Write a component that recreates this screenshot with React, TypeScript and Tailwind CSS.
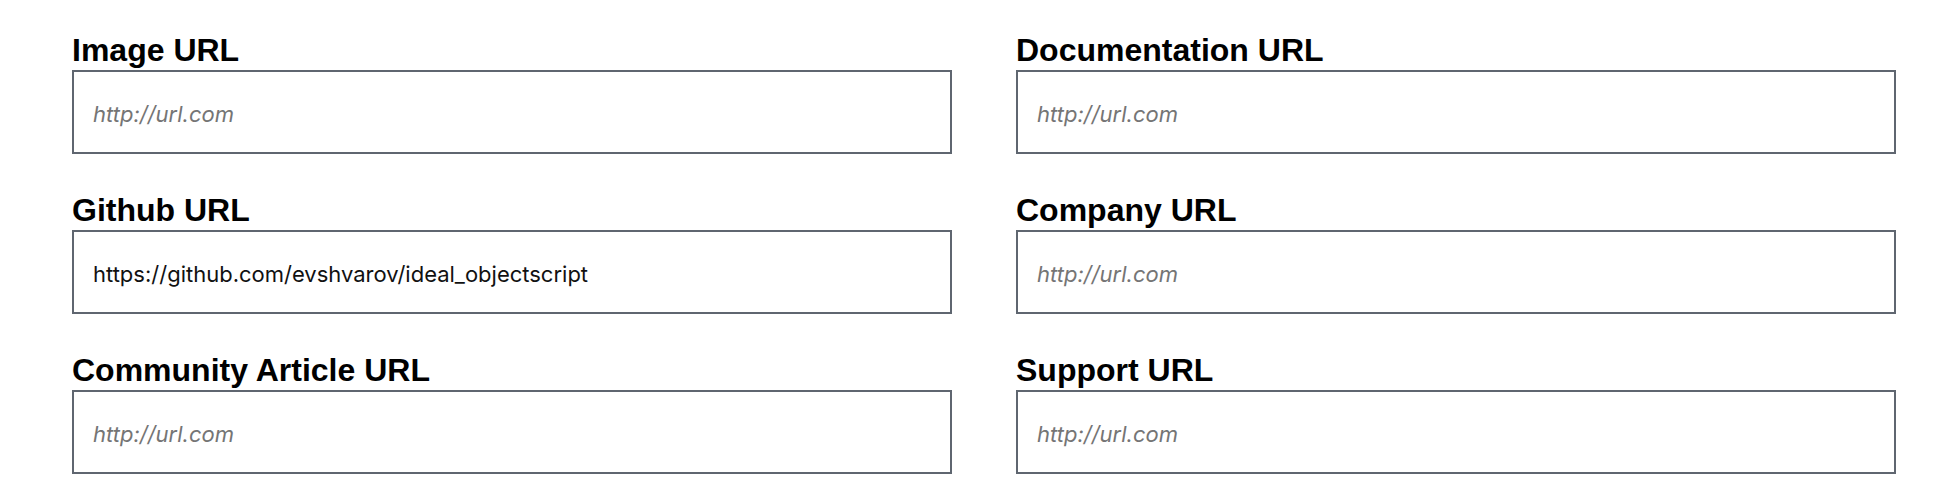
const fields = [
  { label: 'Image URL', value: '' },
  { label: 'Documentation URL', value: '' },
  { label: 'Github URL', value: 'https://github.com/evshvarov/ideal_objectscript' },
  { label: 'Company URL', value: '' },
  { label: 'Community Article URL', value: '' },
  { label: 'Support URL', value: '' },
];

export default function App() {
  return (
    <div className="min-h-screen bg-white pl-[72px] pr-[48px] pt-[34px]">
      <div className="grid grid-cols-2 gap-x-[64px] gap-y-[40px]">
        {fields.map((f) => (
          <div key={f.label} className="flex flex-col">
            <label className="mb-[2px] h-[34px] text-[32px] leading-[33px] font-bold text-black font-['Liberation_Sans',Arial,sans-serif]">
              {f.label}
            </label>
            <input
              type="text"
              defaultValue={f.value}
              placeholder="http://url.com"
              className="h-[84px] w-full border-2 border-[#5f6670] bg-white px-[19px] pt-[4px] text-[22px] text-[#111] font-['Inter',sans-serif] outline-none placeholder:italic placeholder:text-[#757575]"
            />
          </div>
        ))}
      </div>
    </div>
  );
}
